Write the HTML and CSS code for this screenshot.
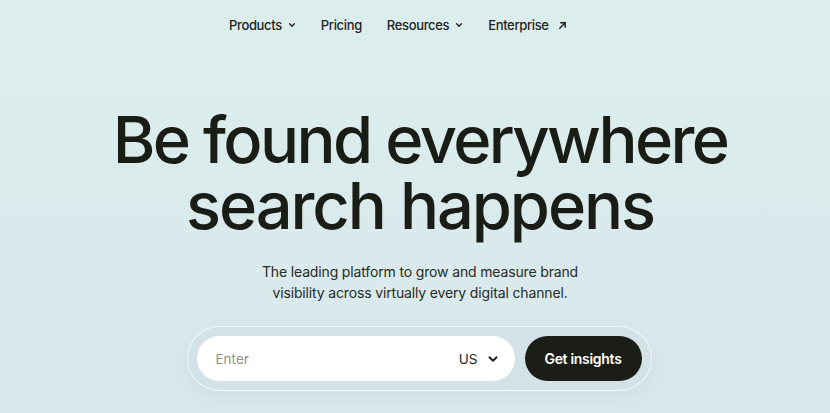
FILE: index.html
```html
<!DOCTYPE html>
<html lang="en">
<head>
<meta charset="utf-8">
<title>Be found everywhere search happens</title>
<link rel="stylesheet" href="styles.css">
</head>
<body>
<header class="nav">
  <a class="nav-item" href="#">Products
    <svg class="chev" viewBox="0 0 10 10" width="8" height="8"><path d="M2 3.5 L5 6.5 L8 3.5" fill="none" stroke="currentColor" stroke-width="1.6" stroke-linecap="round" stroke-linejoin="round"/></svg>
  </a>
  <a class="nav-item" href="#">Pricing</a>
  <a class="nav-item" href="#">Resources
    <svg class="chev" viewBox="0 0 10 10" width="8" height="8"><path d="M2 3.5 L5 6.5 L8 3.5" fill="none" stroke="currentColor" stroke-width="1.6" stroke-linecap="round" stroke-linejoin="round"/></svg>
  </a>
  <a class="nav-item" href="#">Enterprise
    <svg class="arrow" viewBox="0 0 10 10" width="9" height="9"><path d="M2 8 L8 2 M3.2 2 H8 V6.8" fill="none" stroke="currentColor" stroke-width="1.6" stroke-linecap="square"/></svg>
  </a>
</header>
<main class="hero">
  <h1 class="title"><span class="line1">Be found everywhere</span><br><span class="line2">search happens</span></h1>
  <p class="lead">The leading platform to grow and measure brand<br>visibility across virtually every digital channel.</p>
  <form class="search">
    <div class="field">
      <span class="placeholder">Enter</span>
      <span class="country">US
        <svg viewBox="0 0 10 10" width="12" height="12"><path d="M2 3.5 L5 6.5 L8 3.5" fill="none" stroke="currentColor" stroke-width="1.6" stroke-linecap="round" stroke-linejoin="round"/></svg>
      </span>
    </div>
    <button class="cta" type="button">Get insights</button>
  </form>
</main>
</body>
</html>
```
FILE: styles.css
```css
html, body {
  margin: 0;
  padding: 0;
}
body {
  width: 830px;
  height: 413px;
  overflow: hidden;
  background: linear-gradient(180deg, #dbeeec 0%, #daeaec 60%, #dae7ee 100%);
  font-family: Inter, "Noto Sans", sans-serif;
  color: #1b1e17;
}
.nav {
  display: flex;
  align-items: center;
  gap: 25px;
  padding: 16px 0 0 229px;
  height: 18px;
}
.nav-item {
  display: flex;
  align-items: center;
  gap: 6px;
  font-size: 13px;
  font-weight: 500;
  color: #1f231d;
  text-decoration: none;
  letter-spacing: -0.35px;
}
.nav-item .arrow { margin-left: 3px; }
.hero {
  display: flex;
  flex-direction: column;
  align-items: center;
  padding-left: 10px;
}
.title {
  margin: 73px 0 0;
  font-size: 65px;
  line-height: 66px;
  font-weight: 500;
  letter-spacing: -2.6px;
  text-align: center;
  color: #1a1d15;
}
.title .line2 {
  letter-spacing: -2.1px;
}
.lead {
  margin: 22px 0 0;
  font-size: 14px;
  line-height: 21px;
  text-align: center;
  color: #272b25;
  letter-spacing: -0.15px;
}
.search {
  margin: 23px 0 0;
  margin-left: -2px;
  display: flex;
  gap: 10px;
  padding: 9px;
  border-radius: 33px;
  background: rgba(208, 224, 228, 0.75);
  border: 1px solid rgba(255, 255, 255, 0.7);
  box-shadow: 0 6px 16px rgba(170, 195, 205, 0.25);
}
.field {
  width: 318px;
  height: 45px;
  box-sizing: border-box;
  background: #ffffff;
  border-radius: 23px;
  display: flex;
  align-items: center;
  justify-content: space-between;
  padding: 0 16px 0 19px;
}
.placeholder {
  font-size: 13.5px;
  color: #8e918c;
}
.country {
  display: flex;
  align-items: center;
  gap: 9px;
  font-size: 13.5px;
  color: #1f231d;
}
.cta {
  width: 117px;
  height: 45px;
  border: none;
  border-radius: 23px;
  background: #1b1e17;
  color: #ffffff;
  font-family: Inter, "Noto Sans", sans-serif;
  font-size: 14px;
  font-weight: 600;
  letter-spacing: -0.3px;
}
```
